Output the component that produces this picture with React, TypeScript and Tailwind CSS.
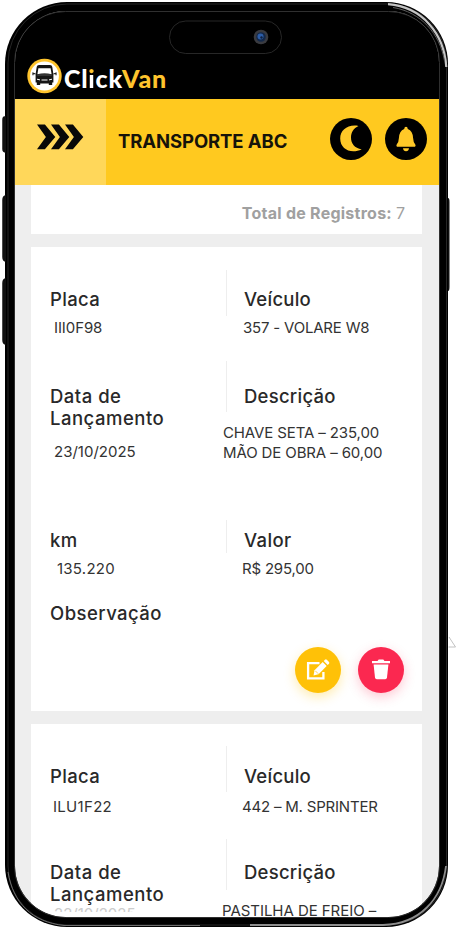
import type { ReactNode } from 'react';
import clsx from 'clsx';

// Round van badge used in the logo
const VanLogo = () => (
  <svg width="36" height="36" viewBox="0 0 36 36" className="shrink-0">
    <circle cx="17.500" cy="18" r="17.2" fill="#ffc42d" />
    <circle cx="17.500" cy="18" r="14.4" fill="#fff" />
    <path
      d="M12 7h11q2 0 2.300 2l1.100 7.300v8.200h-1.200v2.600h-3.400v-1.600h-8.600v1.600H9.800v-2.600H8.600v-8.200L9.700 9q.3-2 2.300-2z"
      fill="#151515"
    />
    <path d="M11.400 10.200h12.200l1 6H10.400z" fill="#fff" />
    <path d="M10.400 16.200q7.100-1.700 14.200 0l.2 1.700H10.200z" fill="#333" />
    <path d="M8.500 16l-2.500-.9v2.200M26.500 16l2.500-.9v2.200" stroke="#222" strokeWidth="1.200" fill="none" />
    <path d="M10 21.200l3 .7M25 21.200l-3 .7M14.500 22h6" stroke="#fff" strokeWidth="1" />
  </svg>
);

const Chevrons = () => (
  <svg width="48" height="26" viewBox="0 0 48 26" fill="#080808">
    {[0, 14, 28].map((x) => (
      <path key={x} transform={`translate(${x} 0)`} d="M0 .5h7.900l10.400 12.400L7.900 25.300H0L8.900 12.900z" />
    ))}
  </svg>
);

const MoonButton = () => (
  <button className="size-[42px] rounded-full bg-black flex items-center justify-center">
    <svg width="42" height="42" viewBox="0 0 42 42">
      <path d="M28.500 8C18 6 10.200 12 10.200 20.500C10.200 31.500 21.500 36.500 31.700 31.200C24.500 30.200 21 25.500 21 19.500C21 14.500 23.500 10.200 28.500 8z" fill="#ffc928" />
    </svg>
  </button>
);

const BellButton = () => (
  <button className="size-[42px] rounded-full bg-black flex items-center justify-center">
    <svg width="42" height="42" viewBox="0 0 42 42" fill="#ffc928">
      <path d="M21 8.800q1.600 0 1.800 2.200q5 2 5.300 9q.2 4.500 2.200 6.500q.8 1.500-.3 2.200H12q-1.100-.7-.3-2.200q2-2 2.200-6.500q.3-7 5.300-9q.2-2.200 1.800-2.200z" />
      <path d="M18 30.200h6q-.4 3-3 3t-3-3z" />
    </svg>
  </button>
);

const EditButton = () => (
  <button className="size-[46px] rounded-full bg-[#ffc107] shadow-[0_4px_12px_#ffc10750]">
    <svg width="46" height="46" viewBox="0 0 46 46">
      <path d="M24.500 16.100H13.100v15.200h15.300V25" fill="none" stroke="#fff" strokeWidth="2.300" />
      <path d="M18.500 28.500l1-5.300 8.200-8.200 4 4-8.200 8.300z" fill="#fff" />
      <path d="M28.700 14l1.300-1.300q.9-.8 1.800 0l2.200 2.200q.8.900 0 1.800L32.700 18z" fill="#fff" />
      <path d="M20.300 23.800l2.900 2.900" stroke="#ffc107" strokeWidth=".7" />
    </svg>
  </button>
);

const DeleteButton = () => (
  <button className="size-[46px] rounded-full bg-[#fb2850] shadow-[0_4px_12px_#fb285040]">
    <svg width="46" height="46" viewBox="0 0 46 46" fill="#fff">
      <path d="M14 14h5.500l1.200-1.400h4.600l1.200 1.400h5.500v2.200H14z" />
      <path d="M15.600 17.600h14.800l-1.400 13q-.2 1.700-1.800 1.700h-8.400q-1.600 0-1.800-1.700z" />
    </svg>
  </button>
);

type FieldProps = {
  label: ReactNode;
  labelClass?: string;
  valueClass?: string;
  children?: ReactNode;
};

const Field = ({ label, labelClass, valueClass, children }: FieldProps) => (
  <div>
    <div
      className={clsx(
        '-ml-px text-[18.500px] leading-[22px] font-medium text-[#292929] whitespace-nowrap',
        labelClass ?? 'tracking-[0.45px]'
      )}
    >
      {label}
    </div>
    <div className={clsx('text-[15px] leading-5 text-[#333] whitespace-nowrap', valueClass)}>{children}</div>
  </div>
);

type RowProps = { className: string; divider: string; left: ReactNode; right: ReactNode };

const Row = ({ className, divider, left, right }: RowProps) => (
  <div className={clsx('grid grid-cols-[175px_1px_1fr] pl-5', className)}>
    {left}
    <div className={clsx('bg-[#eee] w-px', divider)} />
    <div className="pl-[18px]">{right}</div>
  </div>
);

const dateLabel = (
  <>
    Data de
    <br />
    Lançamento
  </>
);

// Phone body: side keys, bezel highlights
const PhoneFrame = () => (
  <svg className="absolute inset-0 pointer-events-none z-10" width="457" height="928" viewBox="0 0 457 928" fill="none">
    <path d="M6 117H4.500Q3 117 3 120V149Q3 152 6 152M6 196Q3 196 3 200V257Q3 261 6 261M6 279Q3 279 3 283V340Q3 344 6 344" fill="#111" stroke="#111" strokeWidth="1.500" />
    <path d="M448 198Q449.500 198 449.500 202V287Q449.500 291 448 291z" fill="#111" />
    <rect x="14.500" y="11.500" width="425" height="906" rx="51" stroke="#3b3b3b" strokeWidth=".8" />
    <rect x="8" y="4" width="438.500" height="921" rx="59" stroke="#303030" strokeWidth=".8" />
    <path d="M388 4.200C422 7 444 33 446.300 67" stroke="#c4c4c4" strokeWidth="2.200" />
    <path d="M393 7.500C421 12 440 34 444.500 61" stroke="#5c5c5c" strokeWidth="1" />
    <path d="M446 866C442 899 420 924 383 925H250" stroke="#8d8d8d" strokeWidth="1.800" />
    <path d="M8 872C13 903 32 922 64 925.500H200" stroke="#777" strokeWidth=".9" />
    <path d="M449 637L455.500 647H448.500" stroke="#bbb" strokeWidth=".9" />
    <rect x="169.500" y="21" width="112" height="32.500" rx="16.200" stroke="#2b2b2b" strokeWidth=".9" fill="#000" />
    <circle cx="261" cy="37" r="7.300" fill="#3a3b40" />
    <circle cx="261" cy="37" r="4.800" fill="#14294a" />
    <circle cx="260.500" cy="36.500" r="3" fill="#2c5da8" />
    <circle cx="261.500" cy="37.500" r="1.200" fill="#10203c" />
  </svg>
);

export default function App() {
  return (
    <main className="relative w-[457px] h-[928px] bg-white overflow-hidden font-['Inter',sans-serif] pt-0.5 pl-[5px]">
      <div className="w-[443px] h-[925px] rounded-[62px] bg-black pt-[9px] pl-2.5">
        <div className="w-[424px] h-[906px] rounded-[51px] overflow-hidden bg-[#eee] flex flex-col">
          {/* Logo bar */}
          <div className="h-[88px] shrink-0 bg-black flex items-end pb-[5px] pl-3">
            <VanLogo />
            <span className="pl-px font-['Lato',sans-serif] font-black text-[25px] leading-8 tracking-[0.75px] text-white">
              Cl
              <span className="text-transparent bg-clip-text bg-[linear-gradient(#ffc42d_38%,#fff_38%)]">i</span>
              ck<span className="text-[#ffc42d]">Van</span>
            </span>
          </div>

          {/* Company header */}
          <header className="h-[86px] shrink-0 bg-[#ffc91f] flex items-center">
            <div className="w-[91px] h-full bg-[#ffd75a] flex items-start pt-[25px] pl-[22px]">
              <Chevrons />
            </div>
            <h1 className="pl-3 flex-1 text-[18.500px] font-bold tracking-[-0.1px] text-[#16130a] whitespace-nowrap">
              TRANSPORTE ABC
            </h1>
            <div className="flex gap-[13px] pr-[12px] pb-[7px]">
              <MoonButton />
              <BellButton />
            </div>
          </header>

          {/* Records */}
          <div className="pl-4 w-[407px] flex flex-col gap-[13px]">
            <div className="h-[49px] bg-white flex justify-end items-center pr-[17px] pt-1.5 text-base text-[#a0a0a0]">
              <span className="font-bold pr-1 tracking-[0.25px]">Total de Registros:</span>7
            </div>

            <section className="h-[464px] bg-white pt-[23px]">
              <Row
                className="h-[91px]"
                divider="h-[46px]"
                left={
                  <Field label="Placa" labelClass="pt-[18px] tracking-[0.35px]" valueClass="pt-2 pl-[3px] tracking-[-0.1px]">
                    III0F98
                  </Field>
                }
                right={
                  <Field label="Veículo" labelClass="pt-[18px] tracking-[0.25px]" valueClass="pt-2 -ml-[2px] tracking-[-0.2px]">
                    357 - VOLARE W8
                  </Field>
                }
              />
              <Row
                className="h-[159px]"
                divider="h-[51px]"
                left={
                  <Field label={dateLabel} labelClass="pt-6 tracking-[0.5px]" valueClass="pt-[13px] pl-[3px]">
                    23/10/2025
                  </Field>
                }
                right={
                  <Field label="Descrição" labelClass="pt-6 tracking-[0.25px]" valueClass="pt-4 -ml-[22px] tracking-[-0.12px]">
                    CHAVE SETA – 235,00
                    <br />
                    MÃO DE OBRA – 60,00
                  </Field>
                }
              />
              <Row
                className="h-[74px]"
                divider="h-[33px]"
                left={
                  <Field label="km" labelClass="pt-[9px] tracking-[0.4px]" valueClass="pt-2 pl-[6px] tracking-[0.25px]">
                    135.220
                  </Field>
                }
                right={
                  <Field label="Valor" labelClass="pt-[9px] tracking-[0.4px]" valueClass="pt-2 -ml-[3px] tracking-[-0.2px]">
                    R$ 295,00
                  </Field>
                }
              />
              <div className="pl-5 pt-2">
                <Field label="Observação" />
              </div>
              <div className="flex justify-end gap-[17px] pr-[18px] pt-[23px]">
                <EditButton />
                <DeleteButton />
              </div>
            </section>

            <section className="h-[194px] bg-white pt-[22px]">
              <Row
                className="h-[93px]"
                divider="h-[46px]"
                left={
                  <Field label="Placa" labelClass="pt-[19px] tracking-[0.35px]" valueClass="pt-[10px] pl-[2px] tracking-[0.3px]">
                    ILU1F22
                  </Field>
                }
                right={
                  <Field label="Veículo" labelClass="pt-[19px] tracking-[0.25px]" valueClass="pt-[10px] -ml-[3px] tracking-[-0.2px]">
                    442 – M. SPRINTER
                  </Field>
                }
              />
              <Row
                className="h-[79px]"
                divider="h-[51px]"
                left={
                  <Field label={dateLabel} labelClass="pt-[22px] tracking-[0.5px]">
                    <div className="mt-[3px] pl-[3px] h-[4px] overflow-hidden text-[#ccc] leading-[12px]">22/10/2025</div>
                  </Field>
                }
                right={
                  <Field label="Descrição" labelClass="pt-[22px] tracking-[0.25px]" valueClass="pt-[18px] -ml-[23px] tracking-[-0.05px]">
                    PASTILHA DE FREIO –
                  </Field>
                }
              />
            </section>
          </div>
        </div>
      </div>
      <PhoneFrame />
    </main>
  );
}
